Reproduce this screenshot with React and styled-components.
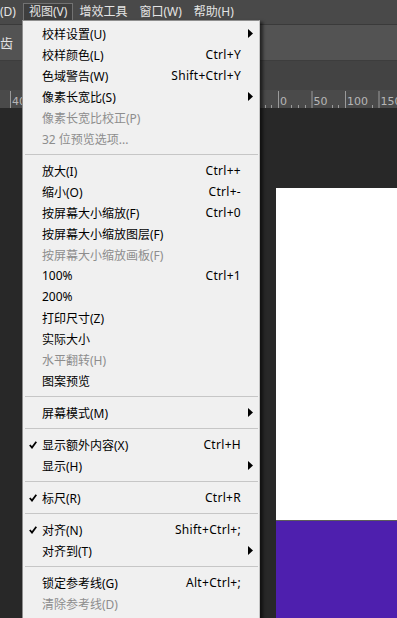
import React from "react";
import styled, { createGlobalStyle } from "styled-components";

const GlobalStyle = createGlobalStyle`
  html, body {
    margin: 0;
    padding: 0;
    background: #282828;
  }
  body {
    font-family: "Noto Sans", "Noto Sans CJK SC", sans-serif;
  }
`;

const Screen = styled.div`
  position: relative;
  display: flex;
  flex-direction: column;
  width: 397px;
  height: 618px;
  overflow: hidden;
  background: #282828;
`;

const MenuBar = styled.div`
  display: flex;
  align-items: flex-start;
  height: 25px;
  padding-top: 3px;
  box-sizing: border-box;
  background: #494949;
  border-bottom: 1px solid #3a3a3a;
`;

const MenuTitle = styled.div`
  height: 17px;
  line-height: 16px;
  padding: 0 5px;
  font-size: 12px;
  color: #e4e4e4;
  white-space: nowrap;
  border: 1px solid transparent;
  border-bottom: none;
  background: ${(p) => (p.$active ? "#3e3e3e" : "transparent")};
  border-color: ${(p) => (p.$active ? "#727272" : "transparent")};
  &:first-child {
    padding-left: 0;
    margin-left: -1px;
    margin-right: 1px;
  }
`;

const OptionsBar = styled.div`
  display: flex;
  align-items: center;
  height: 35px;
  background: #535353;
  border-bottom: 1px solid #3d3d3d;
  color: #e2e2e2;
  font-size: 13px;
`;

const TabBar = styled.div`
  height: 29px;
  background: #434343;
`;

const RulerBar = styled.div`
  height: 18px;
  background: #4a4a4a;
  svg {
    display: block;
  }
`;

const Workspace = styled.div`
  flex: 1;
  display: flex;
  flex-direction: column;
  padding: 80px 0 0 276px;
  background: #282828;
`;

const Page = styled.div`
  height: 332px;
  background: #ffffff;
  border-bottom: 1px solid #5c5c5c;
`;

const Fill = styled.div`
  flex: 1;
  background: #4e1fae;
`;

const Dropdown = styled.div`
  position: absolute;
  left: 22px;
  top: 20px;
  bottom: -20px;
  width: 238px;
  box-sizing: border-box;
  padding-top: 2px;
  background: #f0f0f0;
  border: 1px solid #8e8e8e;
  border-right-color: #c4c4c4;
  box-shadow: 3px 2px 3px rgba(0, 0, 0, 0.55);
  font-size: 12px;
`;

const Item = styled.div`
  display: grid;
  grid-template-columns: 19px 1fr auto 18px;
  align-items: center;
  height: 21px;
  color: ${(p) => (p.$disabled ? "#8d8d8d" : "#000000")};
  white-space: nowrap;
`;

const CheckCell = styled.span`
  display: flex;
  justify-content: flex-end;
  padding-right: 5px;
`;

const Shortcut = styled.span`
  text-align: right;
  letter-spacing: 0.3px;
`;

const ArrowCell = styled.span`
  display: flex;
  justify-content: center;
`;

const Separator = styled.div`
  display: flex;
  align-items: center;
  height: 11px;
  padding: 0 1px 0 2px;
  &::before {
    content: "";
    flex: 1;
    height: 1px;
    background: #c6c6c6;
  }
`;

const Check = () => (
  <svg width="8" height="8" viewBox="0 0 8 8">
    <polyline points="0.8,4 3,6.6 7.3,0.8" fill="none" stroke="#000" strokeWidth="1.8" />
  </svg>
);

const Arrow = () => (
  <svg width="5" height="9" viewBox="0 0 5 9">
    <polygon points="0,0 5,4.5 0,9" fill="#000" />
  </svg>
);

const menu = [
  { label: "校样设置(U)", sub: true },
  { label: "校样颜色(L)", key: "Ctrl+Y" },
  { label: "色域警告(W)", key: "Shift+Ctrl+Y" },
  { label: "像素长宽比(S)", sub: true },
  { label: "像素长宽比校正(P)", off: true },
  { label: "32 位预览选项...", off: true },
  "sep",
  { label: "放大(I)", key: "Ctrl++" },
  { label: "缩小(O)", key: "Ctrl+-" },
  { label: "按屏幕大小缩放(F)", key: "Ctrl+0" },
  { label: "按屏幕大小缩放图层(F)" },
  { label: "按屏幕大小缩放画板(F)", off: true },
  { label: "100%", key: "Ctrl+1" },
  { label: "200%" },
  { label: "打印尺寸(Z)" },
  { label: "实际大小" },
  { label: "水平翻转(H)", off: true },
  { label: "图案预览" },
  "sep",
  { label: "屏幕模式(M)", sub: true },
  "sep",
  { label: "显示额外内容(X)", key: "Ctrl+H", checked: true },
  { label: "显示(H)", sub: true },
  "sep",
  { label: "标尺(R)", key: "Ctrl+R", checked: true },
  "sep",
  { label: "对齐(N)", key: "Shift+Ctrl+;", checked: true },
  { label: "对齐到(T)", sub: true },
  "sep",
  { label: "锁定参考线(G)", key: "Alt+Ctrl+;" },
  { label: "清除参考线(D)", off: true },
];

const ZERO = 278;
const STEP = 33.5;

// labels under the open menu are never seen, so only draw the exposed ones
const isExposed = (x) => x < 22 || x > 258;

const Ruler = () => {
  const marks = [];
  for (let k = -8; k <= 3; k++) {
    const x = ZERO + k * STEP;
    const text = String(Math.abs(k) * 50);
    const labelW = text.length * 7 + 2;
    marks.push(
      <g key={k}>
        <line x1={x + 0.5} y1="1" x2={x + 0.5} y2="18" stroke="#9a9a9a" />
        {isExposed(x) && (
          <text x={x + 2} y="15" fontSize="11" fill="#b6b6b6" fontFamily="DejaVu Sans, sans-serif">
            {text}
          </text>
        )}
        {[1, 2, 3, 4].map((m) => {
          const off = m * (STEP / 5);
          if (off < labelW) return null;
          const tx = Math.round(x + off) + 0.5;
          return <line key={m} x1={tx} y1="15" x2={tx} y2="18" stroke="#9a9a9a" />;
        })}
      </g>
    );
  }
  return (
    <svg width="397" height="18">
      {marks}
    </svg>
  );
};

const App = () => (
  <Screen>
    <GlobalStyle />
    <MenuBar>
      <MenuTitle>(D)</MenuTitle>
      <MenuTitle $active>视图(V)</MenuTitle>
      <MenuTitle>增效工具</MenuTitle>
      <MenuTitle>窗口(W)</MenuTitle>
      <MenuTitle>帮助(H)</MenuTitle>
    </MenuBar>
    <OptionsBar>齿</OptionsBar>
    <TabBar />
    <RulerBar>
      <Ruler />
    </RulerBar>
    <Workspace>
      <Page />
      <Fill />
    </Workspace>
    <Dropdown>
      {menu.map((it, i) =>
        it === "sep" ? (
          <Separator key={i} />
        ) : (
          <Item key={i} $disabled={it.off}>
            <CheckCell>{it.checked && <Check />}</CheckCell>
            <span>{it.label}</span>
            <Shortcut>{it.key}</Shortcut>
            <ArrowCell>{it.sub && <Arrow />}</ArrowCell>
          </Item>
        )
      )}
    </Dropdown>
  </Screen>
);

export default App;
